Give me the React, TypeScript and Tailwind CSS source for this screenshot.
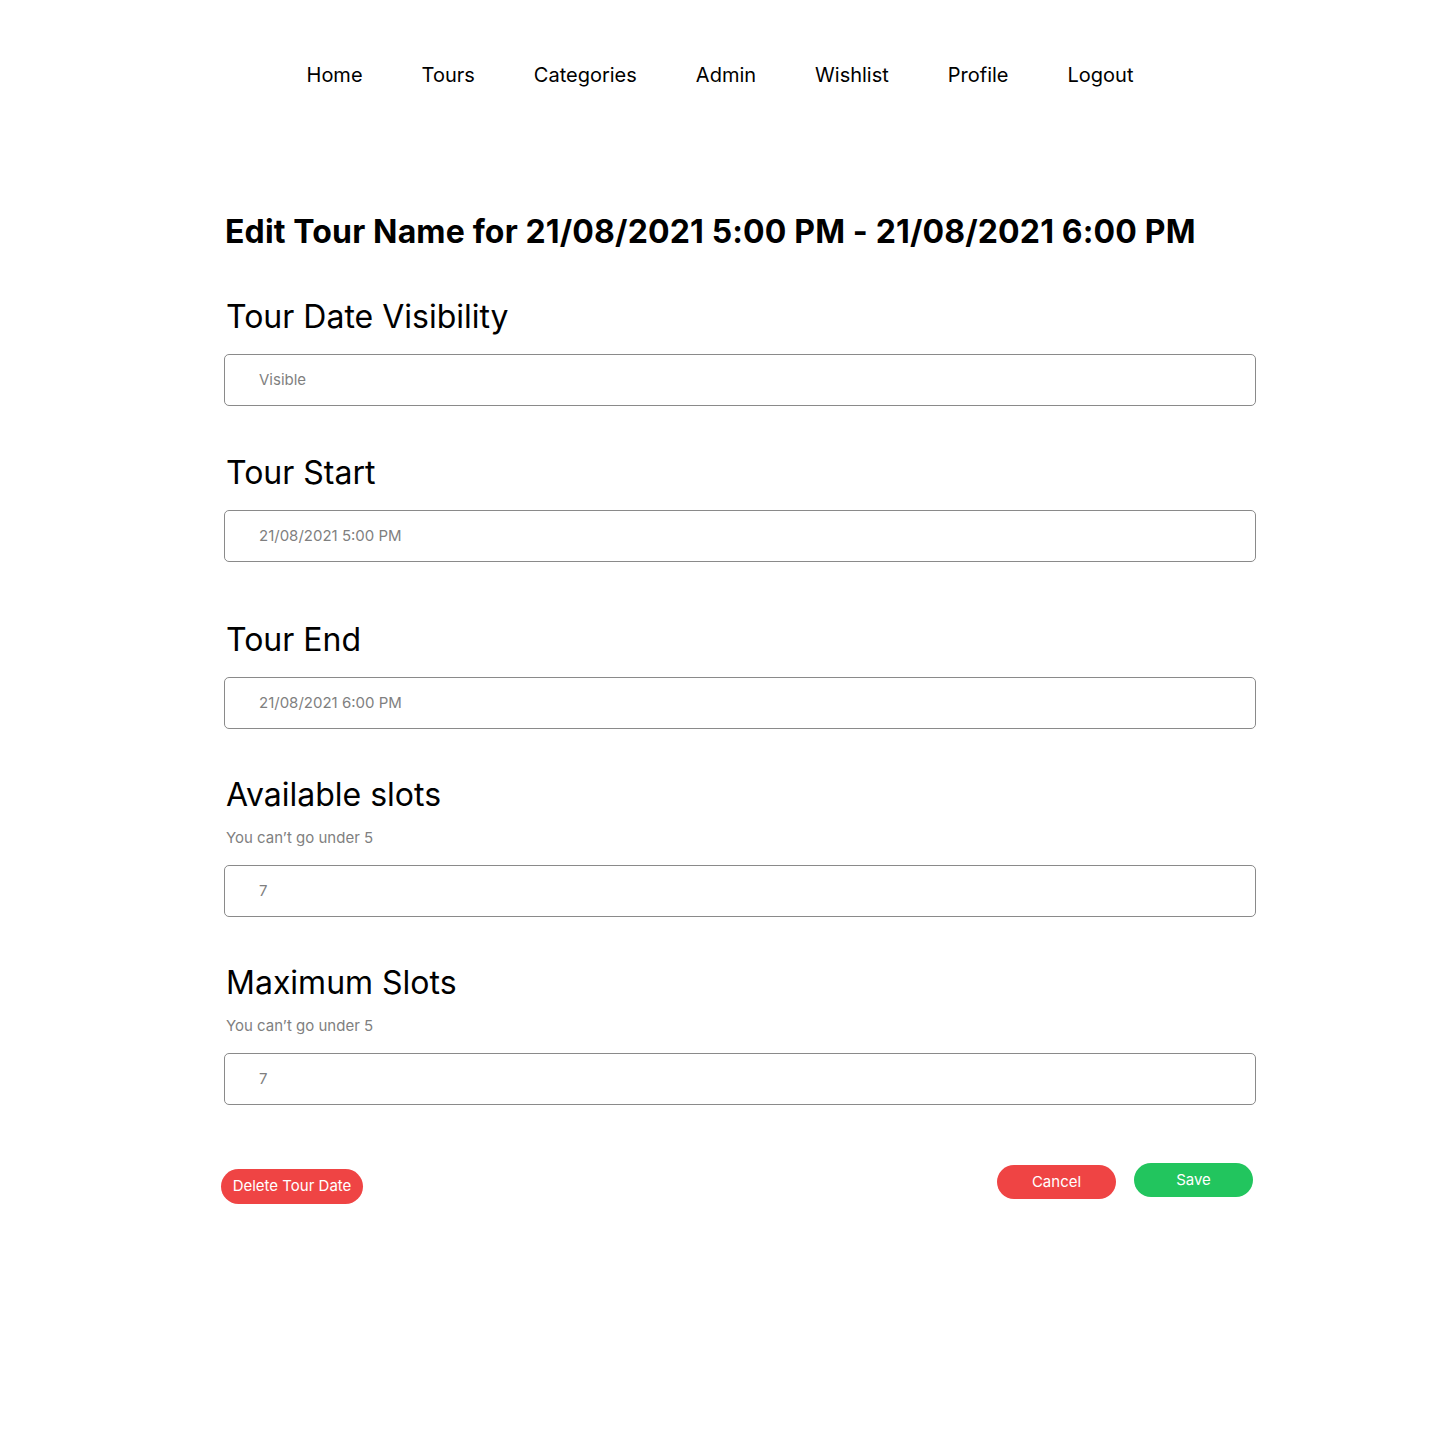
import React from "react";

const font = { fontFamily: "Inter, 'Noto Sans', sans-serif" };

function Field({ value, className = "" }: { value: string; className?: string }) {
  return (
    <div className={`h-[52px] w-full rounded-[5px] border border-[#8a8a8a] flex items-center pl-[34px] text-[15px] text-[#7f7f7f] ${className}`}>
      {value}
    </div>
  );
}

function Label({ children, className = "" }: { children: React.ReactNode; className?: string }) {
  return <div className={`ml-[2px] text-[32px] leading-[40px] text-black ${className}`}>{children}</div>;
}

function Hint({ children, className = "" }: { children: React.ReactNode; className?: string }) {
  return <div className={`ml-[2px] text-[15px] leading-[20px] text-[#7f7f7f] ${className}`}>{children}</div>;
}

export default function App() {
  const nav = ["Home", "Tours", "Categories", "Admin", "Wishlist", "Profile", "Logout"];
  return (
    <div className="min-h-[1429px] w-full bg-white" style={font}>
      <nav className="pt-[61px] flex justify-center gap-[59px] text-[20px] leading-[28px] text-black">
        {nav.map((n) => (
          <span key={n}>{n}</span>
        ))}
      </nav>
      <main className="w-[1032px] ml-[224px]">
        <h1 className="mt-[123px] ml-[1px] text-[32px] leading-[40px] font-bold tracking-[0.15px] text-black">
          Edit Tour Name for 21/08/2021 5:00 PM - 21/08/2021 6:00 PM
        </h1>
        <Label className="mt-[45px]">Tour Date Visibility</Label>
        <Field value="Visible" className="mt-[17px]" />
        <Label className="mt-[47px]">Tour Start</Label>
        <Field value="21/08/2021 5:00 PM" className="mt-[17px]" />
        <Label className="mt-[58px]">Tour End</Label>
        <Field value="21/08/2021 6:00 PM" className="mt-[17px]" />
        <Label className="mt-[46px]">Available slots</Label>
        <Hint className="mt-[13px]">You can’t go under 5</Hint>
        <Field value="7" className="mt-[17px]" />
        <Label className="mt-[46px]">Maximum Slots</Label>
        <Hint className="mt-[13px]">You can’t go under 5</Hint>
        <Field value="7" className="mt-[17px]" />
        <div className="mt-[58px] flex items-start">
          <button className="ml-[-3px] mt-[6px] h-[35px] w-[142px] rounded-full bg-[#ef4444] text-[15px] text-white">
            Delete Tour Date
          </button>
          <div className="ml-auto mr-[3px] flex items-start gap-[18px]">
            <button className="mt-[2px] h-[34px] w-[119px] rounded-full bg-[#ef4444] text-[15px] text-white">
              Cancel
            </button>
            <button className="h-[34px] w-[119px] rounded-full bg-[#22c55e] text-[15px] text-white">
              Save
            </button>
          </div>
        </div>
      </main>
    </div>
  );
}
